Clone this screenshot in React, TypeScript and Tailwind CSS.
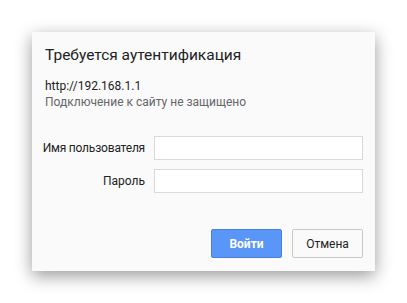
import React from "react";

export default function App() {
  return (
    <div className="w-[407px] h-[303px] bg-white pt-[32px] pl-[32px]" style={{ fontFamily: 'Roboto, "Noto Sans", sans-serif' }}>
      <div className="w-[343px] h-[239px] bg-[#fafafa] shadow-[0_5px_16px_rgba(0,0,0,0.4)] flex flex-col pl-[13px] pr-[12px]">
        <div className="pt-[13px] text-[15.5px] leading-[20px] text-[#222]">Требуется аутентификация</div>
        <div className="mt-[13px] text-[12px] leading-[16px] text-[#222]">http://192.168.1.1</div>
        <div className="text-[12px] leading-[16px] text-[#666]">Подключение к сайту не защищено</div>
        <div className="mt-[26px] flex flex-col gap-[9px]">
          <div className="flex items-center">
            <div className="w-[100px] flex justify-end whitespace-nowrap text-[12px] tracking-[-0.2px] text-[#222]">Имя пользователя</div>
            <input className="ml-[9px] w-[209px] h-[24px] bg-white border border-[#d9d9d9] outline-none" />
          </div>
          <div className="flex items-center">
            <div className="w-[100px] flex justify-end whitespace-nowrap text-[12px] text-[#222]">Пароль</div>
            <input className="ml-[9px] w-[209px] h-[24px] bg-white border border-[#d9d9d9] outline-none" />
          </div>
        </div>
        <div className="mt-auto mb-[13px] flex justify-end gap-[10px]">
          <button className="w-[71px] h-[29px] bg-[#5a96f7] border border-[#4880e0] rounded-[2px] text-white font-bold text-[12px]">Войти</button>
          <button className="w-[71px] h-[29px] bg-[#fafafa] border border-[#c8c8c8] rounded-[2px] text-[#222] text-[12px]">Отмена</button>
        </div>
      </div>
    </div>
  );
}
